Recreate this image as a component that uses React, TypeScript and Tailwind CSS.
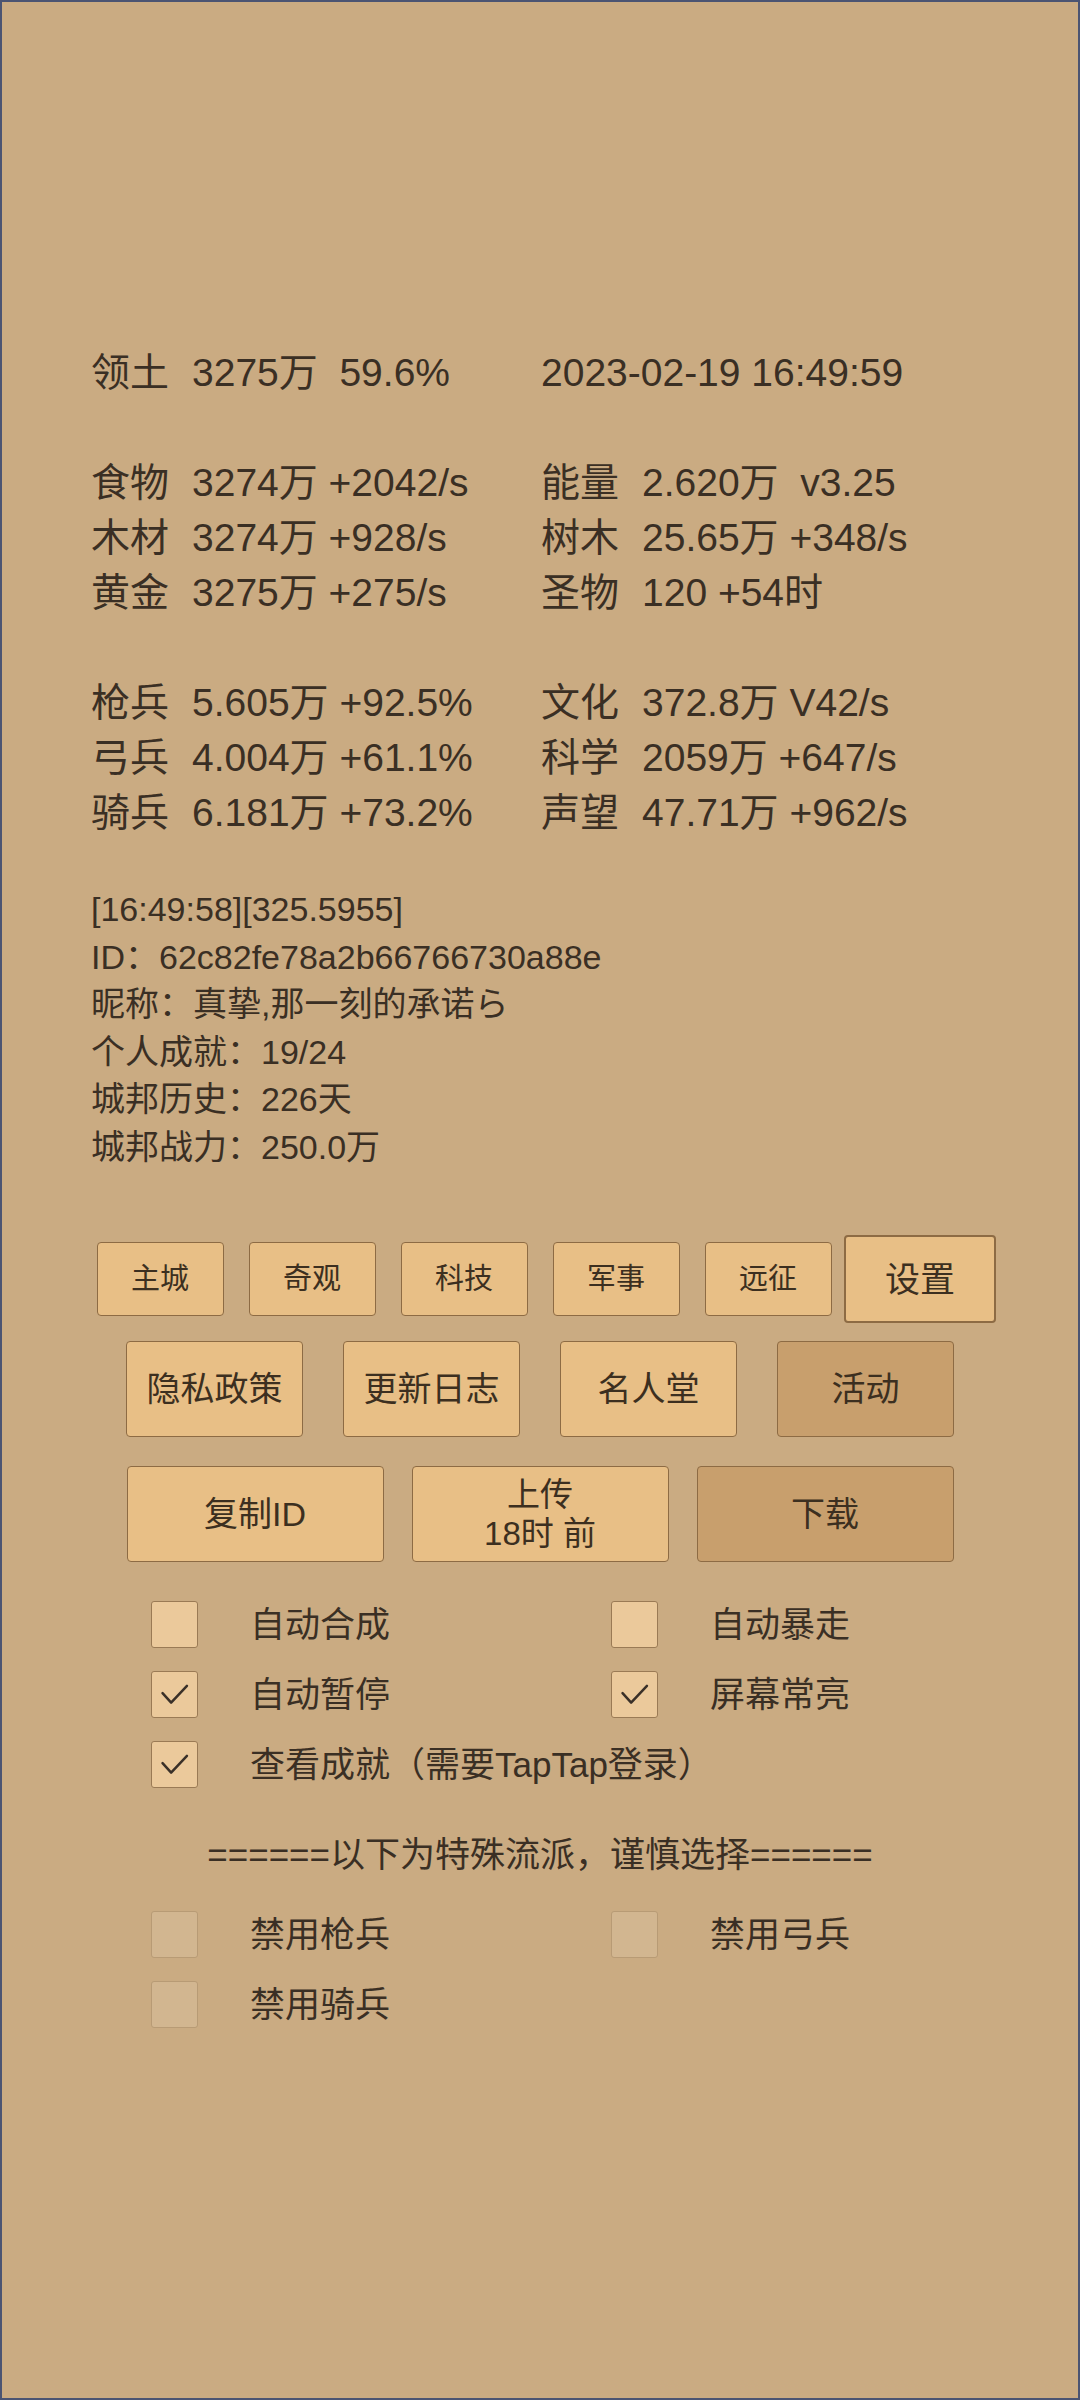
import { clsx } from 'clsx'

const FONT = "font-['Liberation_Sans','Noto_Sans_CJK_SC',sans-serif]"

type Cell = [string, string] | null
const STATS: ([Cell, Cell] | null)[] = [
  [['领土', '3275万  59.6%'], ['', '2023-02-19 16:49:59']],
  null,
  [['食物', '3274万 +2042/s'], ['能量', '2.620万  v3.25']],
  [['木材', '3274万 +928/s'], ['树木', '25.65万 +348/s']],
  [['黄金', '3275万 +275/s'], ['圣物', '120 +54时']],
  null,
  [['枪兵', '5.605万 +92.5%'], ['文化', '372.8万 V42/s']],
  [['弓兵', '4.004万 +61.1%'], ['科学', '2059万 +647/s']],
  [['骑兵', '6.181万 +73.2%'], ['声望', '47.71万 +962/s']],
]

const INFO = [
  '[16:49:58][325.5955]',
  'ID：62c82fe78a2b66766730a88e',
  '昵称：真挚,那一刻的承诺ら',
  '个人成就：19/24',
  '城邦历史：226天',
  '城邦战力：250.0万',
]

const TABS = ['主城', '奇观', '科技', '军事', '远征']

function StatCell({ cell }: { cell: Cell }) {
  if (!cell) return <div className="w-[450px]" />
  const [label, value] = cell
  return (
    <div className="flex w-[450px] whitespace-pre">
      {label && <span className="w-[101px]">{label}</span>}
      <span>{value}</span>
    </div>
  )
}

function Btn({
  children,
  className,
  dark,
}: {
  children: React.ReactNode
  className?: string
  dark?: boolean
}) {
  return (
    <button
      className={clsx(
        'flex items-center justify-center rounded-[4px] border border-[#8d6b44] leading-none text-[#3c2f20]',
        dark ? 'bg-[#c89f6d]' : 'bg-[#e8bf86]',
        className
      )}
    >
      {children}
    </button>
  )
}

function Check({ checked, disabled }: { checked?: boolean; disabled?: boolean }) {
  return (
    <div
      className={clsx(
        'flex h-[47px] w-[47px] shrink-0 items-center justify-center rounded-[3px] border',
        disabled ? 'border-[#b89b75] bg-[#d2b690]' : 'border-[#9a7a55] bg-[#ebc99b]'
      )}
    >
      {checked && (
        <svg width="47" height="47" viewBox="0 0 47 47">
          <polyline
            points="11,22 20,32 36.5,14.5"
            fill="none"
            stroke="#3a3028"
            strokeWidth="2.6"
            strokeLinecap="round"
            strokeLinejoin="round"
          />
        </svg>
      )}
    </div>
  )
}

function Option({ label, checked, disabled }: { label: string; checked?: boolean; disabled?: boolean }) {
  return (
    <div className="flex h-[70px] w-[460px] shrink-0 items-center whitespace-nowrap">
      <Check checked={checked} disabled={disabled} />
      <span className="ml-[52px] text-[35px] leading-none">{label}</span>
    </div>
  )
}

export default function App() {
  return (
    <div
      className={clsx(
        'h-[2400px] w-[1080px] overflow-hidden border-2 border-[#4b5472] bg-[#caab82] text-[#3a2f24]',
        FONT
      )}
    >
      {/* 资源统计 */}
      <div className="pl-[89px] pt-[343px] text-[39px] leading-[55px]">
        {STATS.map((row, i) =>
          row ? (
            <div key={i} className="flex">
              <StatCell cell={row[0]} />
              <StatCell cell={row[1]} />
            </div>
          ) : (
            <div key={i} className="h-[55px]" />
          )
        )}
      </div>

      {/* 玩家信息 */}
      <div className="mt-[46px] pl-[89px] text-[34px] leading-[47.5px]">
        {INFO.map((t) => (
          <div key={t}>{t}</div>
        ))}
      </div>

      {/* 标签按钮 */}
      <div className="mt-[64px] flex h-[88px] justify-center">
        {TABS.map((t) => (
          <div key={t} className="flex w-[152px] items-center justify-center">
            <Btn className="h-[74px] w-[127px] text-[29px]">{t}</Btn>
          </div>
        ))}
        <div className="flex w-[152px] items-center justify-center">
          <Btn className="h-[88px] w-[152px] border-2 border-[#3a2a18] text-[35px]">设置</Btn>
        </div>
      </div>

      <div className="mt-[18px] flex justify-center gap-[40px] text-[34px]">
        <Btn className="h-[96px] w-[177px]">隐私政策</Btn>
        <Btn className="h-[96px] w-[177px]">更新日志</Btn>
        <Btn className="h-[96px] w-[177px]">名人堂</Btn>
        <Btn className="h-[96px] w-[177px]" dark>
          活动
        </Btn>
      </div>

      <div className="mt-[29px] flex justify-center gap-[28px] text-[34px]">
        <Btn className="h-[96px] w-[257px]">复制ID</Btn>
        <Btn className="h-[96px] w-[257px] flex-col gap-[6px] text-[33px]">
          <span>上传</span>
          <span>18时 前</span>
        </Btn>
        <Btn className="h-[96px] w-[257px]" dark>
          下载
        </Btn>
      </div>

      {/* 选项 */}
      <div className="mt-[27px] pl-[149px]">
        <div className="flex">
          <Option label="自动合成" />
          <Option label="自动暴走" />
        </div>
        <div className="flex">
          <Option label="自动暂停" checked />
          <Option label="屏幕常亮" checked />
        </div>
        <Option label="查看成就（需要TapTap登录）" checked />
      </div>

      <div className="mt-[28px] flex h-[56px] items-center justify-center text-[35px]">
        ======以下为特殊流派，谨慎选择======
      </div>

      <div className="mt-[16px] pl-[149px]">
        <div className="flex">
          <Option label="禁用枪兵" disabled />
          <Option label="禁用弓兵" disabled />
        </div>
        <Option label="禁用骑兵" disabled />
      </div>
    </div>
  )
}
